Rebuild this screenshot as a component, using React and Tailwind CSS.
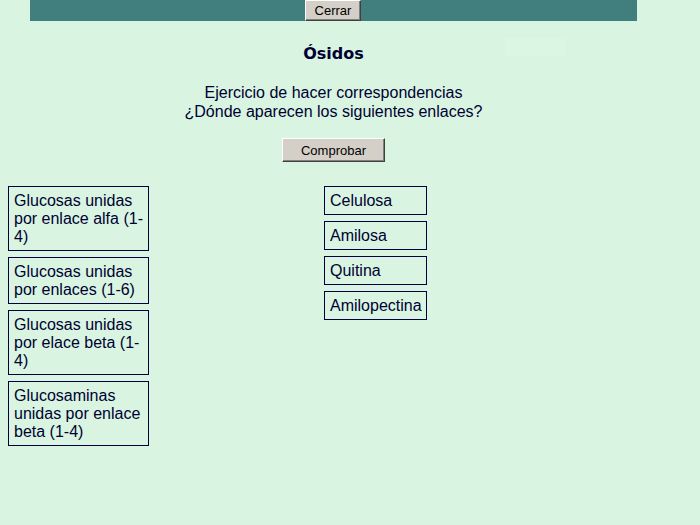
import React from "react";

const left = [
  "Glucosas unidas por enlace alfa (1-4)",
  "Glucosas unidas por enlaces (1-6)",
  "Glucosas unidas por elace beta (1-4)",
  "Glucosaminas unidas por enlace beta (1-4)",
];

const right = ["Celulosa", "Amilosa", "Quitina", "Amilopectina"];

const btn =
  "bg-[#d4d0c8] border border-t-white border-l-white border-r-[#404040] border-b-[#404040] text-black text-[13px] leading-none shadow-[inset_-1px_-1px_0_#808080]";

export default function App() {
  return (
    <div className="min-h-[525px] w-full bg-[#d9f5e1] text-[#000033] font-['Liberation_Sans',Arial,sans-serif] relative">
      <div className="w-[667px]">
        {/* top bar */}
        <div className="mx-[30px] h-[21px] bg-[#417f7f] flex justify-center">
          <button className={`${btn} w-[56px] h-[21px] ml-[-1px]`}>Cerrar</button>
        </div>

        <h1 className="pt-[23px] text-center text-[16px] leading-[19px] font-bold font-['DejaVu_Sans',Verdana,sans-serif]">
          Ósidos
        </h1>

        <div className="mt-[20px] text-center text-[16px] leading-[19px]">
          <p>Ejercicio de hacer correspondencias</p>
          <p>¿Dónde aparecen los siguientes enlaces?</p>
        </div>

        <div className="mt-[17px] flex justify-center">
          <button className={`${btn} w-[103px] h-[24px]`}>Comprobar</button>
        </div>

        <div className="mt-[24px] flex pl-[8px]">
          <div className="w-[141px] flex flex-col gap-[6px]">
            {left.map((t) => (
              <div
                key={t}
                className="border border-[#000040] px-[5px] pt-[5px] pb-[4px] text-[16px] leading-[18px]"
              >
                {t}
              </div>
            ))}
          </div>
          <div className="ml-[175px] w-[103px] flex flex-col gap-[6px]">
            {right.map((t) => (
              <div
                key={t}
                className="border border-[#000040] px-[5px] pt-[5px] pb-[4px] text-[16px] leading-[18px] whitespace-nowrap"
              >
                {t}
              </div>
            ))}
          </div>
        </div>
      </div>
      <div className="absolute left-[505px] top-[38px] w-[60px] h-[18px] bg-[#dbf6e3]" />
    </div>
  );
}
